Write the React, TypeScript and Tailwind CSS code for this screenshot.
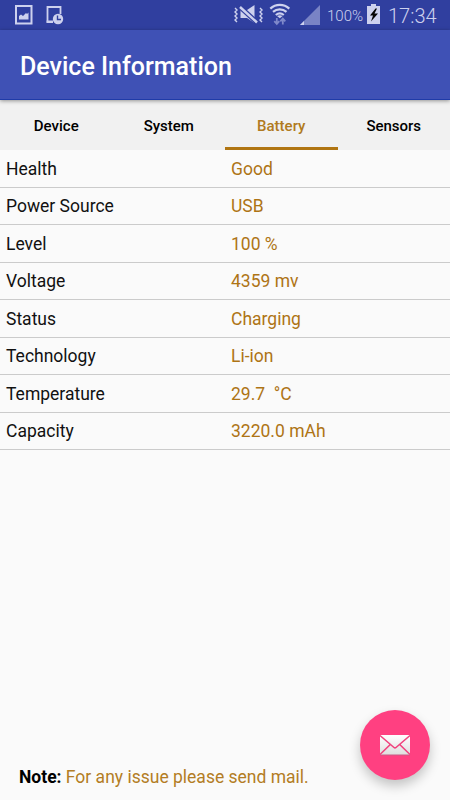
import React, { useState } from 'react';

const TABS = ['Device', 'System', 'Battery', 'Sensors'];

const BATTERY_INFO = [
	{ label: 'Health', value: 'Good' },
	{ label: 'Power Source', value: 'USB' },
	{ label: 'Level', value: '100 %' },
	{ label: 'Voltage', value: '4359 mv' },
	{ label: 'Status', value: 'Charging' },
	{ label: 'Technology', value: 'Li-ion' },
	{ label: 'Temperature', value: '29.7  °C' },
	{ label: 'Capacity', value: '3220.0 mAh' },
];

const App: React.FunctionComponent = () => {
	const [activeTab, setActiveTab] = useState('Battery');

	return (
		<div className="flex h-[800px] w-[450px] flex-col overflow-hidden bg-[#fafafa] font-['Roboto',sans-serif] text-[#111]">
			<StatusBar />
			<header className="z-10 flex h-[70px] shrink-0 items-center border-b border-[#1f3ba8] bg-[#3f51b5] pt-[3px] pl-5 shadow-[0_1px_4px_rgba(0,0,0,0.4)]">
				<h1 className="text-[25px] leading-none font-medium text-white">Device Information</h1>
			</header>
			<nav className="flex h-[50px] shrink-0 bg-[#f1f1f1]">
				{TABS.map(tab => (
					<button
						key={tab}
						className={`flex-1 border-b-[3px] pt-[5px] text-[15px] font-medium ${
							tab === activeTab ? 'border-[#b07512] text-[#b07a20]' : 'border-transparent text-black'
						}`}
						onClick={() => setActiveTab(tab)}
					>
						{tab}
					</button>
				))}
			</nav>
			<main className="flex-1">
				{BATTERY_INFO.map(info => (
					<div
						key={info.label}
						className="flex h-[37.5px] items-center border-b border-[#cbcbcb] pt-[2.5px] text-[17.5px] leading-none"
					>
						<div className="w-1/2 pl-[6px]">{info.label}</div>
						<div className="w-1/2 pl-[6px] whitespace-pre text-[#ae7415]">{info.value}</div>
					</div>
				))}
			</main>
			<footer className="flex h-[90px] shrink-0 justify-between pr-5 pl-[19px]">
				<p className="pt-[57px] text-[17.5px] leading-5 text-[#b37d24]">
					<span className="font-bold text-black">Note:</span> For any issue please send mail.
				</p>
				<button
					aria-label="Send mail"
					className="flex h-[70px] w-[70px] items-center justify-center rounded-full bg-[#ff4081] shadow-[0_6px_12px_rgba(0,0,0,0.22)]"
				>
					<MailIcon />
				</button>
			</footer>
		</div>
	);
};

const StatusBar = () => (
	<div className="flex h-[30px] shrink-0 items-center bg-[#303f9f] text-[#cdd1ee]">
		<svg className="ml-[14px] h-[30px] w-[52px]" viewBox="14 0 52 30" fill="none">
			<path d="M16 6h15.500v17.500H16z" stroke="currentColor" strokeWidth="2" />
			<path d="M19 19.500v-3.500l2-1.500 2 1.500 3-3 1 1 1.500-1.500v7z" fill="currentColor" />
			<path d="M52.500 21.800h-5V7h13v7" stroke="currentColor" strokeWidth="1.800" />
			<path d="M46.600 20.500h6.400v2.500h-6.400z" fill="currentColor" />
			<circle cx="58" cy="19" r="5.200" fill="currentColor" />
			<path d="M57.500 15.500v4H61" stroke="#303f9f" strokeWidth="1.400" />
		</svg>
		<svg className="ml-auto h-[30px] w-[90px]" viewBox="232 0 90 30" fill="none">
			<path d="M235 8l2 2-2 2 2 2-2 2 2 2-2 2 2 2M260 8l2 2-2 2 2 2-2 2 2 2-2 2 2 2" stroke="currentColor" strokeWidth="1.400" />
			<path d="M240.500 10h6.500l7.500-5v18l-7.500-5h-6.500z" fill="currentColor" />
			<path d="M239.500 6.500l18 16.500" stroke="#303f9f" strokeWidth="5" />
			<path d="M240 7l17 15.500" stroke="currentColor" strokeWidth="2.500" />
			<path d="M270.300 8.600c5.500-5 13.500-5 19 0M273 11.900c4-3.500 9.500-3.500 13.500 0M275.800 15c2.500-2 5.500-2 8 0" stroke="currentColor" strokeWidth="2.200" />
			<path d="M277 16q2.800-1.500 5.600 0l-2.800 2.300z" fill="currentColor" />
			<path d="M276.800 18v6M274.300 21.200l2.500 2.800 2.500-2.800M282.800 24.500v-6M280.300 21.300l2.500-2.800 2.500 2.800" stroke="#7f89ca" strokeWidth="1.800" />
			<path d="M300 25L320 5v20z" fill="#7983c5" />
			<path d="M300 25l4-4v4z" fill="currentColor" />
		</svg>
		<span className="ml-[5px] w-[37px] pt-[2px] text-[15px] leading-none font-light">100%</span>
		<svg className="ml-[3px] h-[30px] w-[14px]" viewBox="367 0 14 30">
			<path d="M371 4h5v2h4v18h-13V6h4z" fill="currentColor" />
			<path d="M375.500 8.500l-5.500 7h3l-2 6 7-8h-3.500l2.500-5z" fill="#050505" />
		</svg>
		<span className="ml-[7px] w-[62px] pt-[2px] text-[20px] leading-none font-light">17:34</span>
	</div>
);

const MailIcon = () => (
	<svg className="h-[24px] w-[34px]" viewBox="0 0 34 24">
		<defs>
			<linearGradient id="paper" x1="0" y1="2" x2="0" y2="22" gradientUnits="userSpaceOnUse">
				<stop stopColor="#fff" />
				<stop offset="1" stopColor="#dedede" />
			</linearGradient>
		</defs>
		<rect x="2" y="2.500" width="30" height="20" rx="1" fill="#c95a85" />
		<rect x="2" y="2" width="30" height="19.500" rx="1" fill="url(#paper)" />
		<path d="M2 2.500l14 12q1 .8 2 0L32 2.500M2 21.500L12.300 11.500M32 21.500L21.700 11.500" fill="none" stroke="#f0437e" strokeWidth="1.600" />
	</svg>
);

export default App;
